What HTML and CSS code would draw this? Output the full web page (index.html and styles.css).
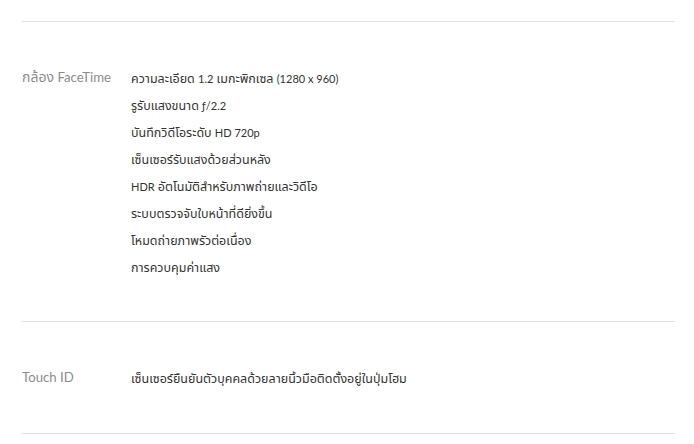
FILE: index.html
```html
<!DOCTYPE html>
<html lang="th">
<head>
<meta charset="utf-8">
<link rel="stylesheet" href="styles.css">
</head>
<body>
<div class="specs">
  <section class="row">
    <h3 class="label">กล้อง <span class="en">FaceTime</span></h3>
    <ul class="values">
      <li>ความละเอียด <span class="en">1.2</span> เมกะพิกเซล <span class="en">(1280 x 960)</span></li>
      <li>รูรับแสงขนาด <span class="en">ƒ/2.2</span></li>
      <li>บันทึกวิดีโอระดับ <span class="en">HD 720p</span></li>
      <li>เซ็นเซอร์รับแสงด้วยส่วนหลัง</li>
      <li><span class="en">HDR</span> อัตโนมัติสำหรับภาพถ่ายและวิดีโอ</li>
      <li>ระบบตรวจจับใบหน้าที่ดียิ่งขึ้น</li>
      <li>โหมดถ่ายภาพรัวต่อเนื่อง</li>
      <li>การควบคุมค่าแสง</li>
    </ul>
  </section>
  <section class="row">
    <h3 class="label"><span class="en">Touch ID</span></h3>
    <ul class="values">
      <li>เซ็นเซอร์ยืนยันตัวบุคคลด้วยลายนิ้วมือติดตั้งอยู่ในปุ่มโฮม</li>
    </ul>
  </section>
</div>
</body>
</html>
```

FILE: styles.css
```css
html, body {
  margin: 0;
  padding: 0;
  background: #ffffff;
}
body {
  font-family: Lato, "Noto Sans Thai", "Noto Sans", sans-serif;
}
.specs {
  padding: 21px 19px 0 22px;
}
.row {
  display: flex;
  border-top: 1px solid #e3e3e3;
  padding: 43px 0 40px;
}
.row:last-child {
  border-bottom: 1px solid #e3e3e3;
  padding-bottom: 41px;
}
.label {
  width: 109px;
  flex: none;
  margin: 0;
  font-size: 14px;
  font-weight: 400;
  color: #8c8c8c;
  line-height: 24px;
}
.label .en {
  font-size: 13.2px;
}
.values {
  list-style: none;
  margin: 0;
  padding: 0;
  font-size: 12.5px;
  color: #333333;
  line-height: 27px;
}
.values .en {
  font-size: 11px;
}
```
